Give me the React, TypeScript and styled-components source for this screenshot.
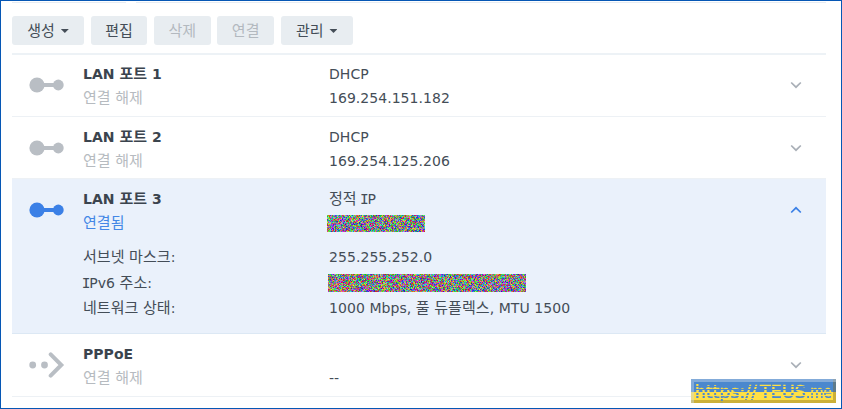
import React, { useEffect, useRef } from 'react';
import styled, { createGlobalStyle, css } from 'styled-components';

const GlobalStyle = createGlobalStyle`
  * { box-sizing: border-box; }
  body {
    margin: 0;
    background: #fff;
    font-family: 'DejaVu Sans', 'Noto Sans CJK KR', sans-serif;
    font-size: 14px;
    letter-spacing: 0.04px;
    color: #444d57;
  }
`;

const Window = styled.div`
  position: relative;
  width: 842px;
  height: 409px;
  border: 1px solid #0657b5;
  padding: 0 15px 0 11px;
  overflow: hidden;
`;

const TabEdge = styled.div`
  display: flex;
  gap: 10px;
  height: 2px;
  padding-top: 1px;
  i { height: 1px; background: #e6ecf3; }
  i:first-child { width: 114px; }
  i:last-child { flex: 1; }
`;

const Toolbar = styled.div`
  display: flex;
  gap: 6.8px;
  padding: 13px 0 8px;
`;

const Button = styled.button<{ $wide?: boolean }>`
  display: flex;
  align-items: center;
  justify-content: center;
  gap: 6px;
  width: ${(p) => (p.$wide ? 72 : 56.5)}px;
  height: 29px;
  padding: 0 0 2px;
  border: 0;
  border-radius: 3px;
  background: #e8edf1;
  color: #444d57;
  font: inherit;
  line-height: 27px;
  &:disabled { color: #b3b9bf; }
`;

const Caret = styled.span`
  width: 8px;
  height: 4px;
  margin-top: 3px;
  background: #444d57;
  clip-path: polygon(0 0, 100% 0, 50% 100%);
`;

const List = styled.div`
  border-top: 2px solid #edf2f6;
`;

const Row = styled.section<{ $active?: boolean; $height: number; $offset: number }>`
  display: grid;
  grid-template-columns: 71px 246px 1fr 44px;
  grid-template-rows: 62px;
  height: ${(p) => p.$height}px;
  padding-top: ${(p) => p.$offset}px;
  border-bottom: 1px solid #edf1f5;
  ${(p) => p.$active && css`
    background: #eaf1fb;
    border-bottom-color: #dce8f4;
  `}
`;

const IconCell = styled.div<{ $active?: boolean }>`
  padding-left: 17px;
  color: ${(p) => (p.$active ? '#3b80e6' : '#b9bec4')};
  svg { display: block; margin-top: 17px; }
`;

const Lines = styled.div`
  display: flex;
  flex-direction: column;
  align-items: flex-start;
  padding-top: 7px;
`;

const Line = styled.div<{ $tone?: 'muted' | 'blue'; $strong?: boolean }>`
  height: 24px;
  line-height: 24px;
  white-space: nowrap;
  font-weight: ${(p) => (p.$strong ? 700 : 400)};
  color: ${(p) => (p.$tone === 'muted' ? '#b6bbc0' : p.$tone === 'blue' ? '#4387e6' : p.$strong ? '#3b444e' : '#444d57')};
`;

const Hangul = styled.span`
  font-family: 'Noto Sans CJK KR', sans-serif;
  font-size: 15px;
  line-height: 0;
`;

const SerifI = styled.span`
  font-family: 'DejaVu Sans Mono', monospace;
  font-size: 14.5px;
  margin: 0 -1.4px 0 -1.2px;
  line-height: 0;
`;

const Details = styled.dl`
  grid-column: 2 / 4;
  display: grid;
  grid-template-columns: 246px 1fr;
  grid-auto-rows: 25.6px;
  align-content: start;
  margin: 0;
  padding-top: 3px;
  line-height: 25.6px;
  letter-spacing: 0.06px;
  white-space: nowrap;
  dt, dd { margin: 0; }
`;

const Toggle = styled.div<{ $active?: boolean }>`
  padding: 26px 0 0 7.6px;
  color: ${(p) => (p.$active ? '#3b80e6' : '#a9afb7')};
  svg { display: block; }
`;

const NoiseCanvas = styled.canvas<{ $shift: number; $drop: number }>`
  display: block;
  flex: none;
  margin: ${(p) => p.$drop}px 0 0 ${(p) => p.$shift}px;
`;

const Badge = styled.div`
  position: absolute;
  left: 690px;
  top: 378px;
  width: 145px;
  height: 24px;
  background: linear-gradient(#4b88ce 0 13px, #ffe045 13px);
  box-shadow: inset 3px 3px 0 rgba(200, 215, 230, 0.45), inset -3px -3px 0 rgba(125, 105, 40, 0.4);
  svg { display: block; overflow: visible; }
`;

const Text = ({ children }: { children: string }) => (
  <>
    {children.split(/([가-힣]+|I(?=P))/).map((part, i) => {
      if (part === 'I') return <SerifI key={i}>I</SerifI>;
      return /[가-힣]/.test(part) ? <Hangul key={i}>{part}</Hangul> : part;
    })}
  </>
);

const LinkIcon = () => (
  <svg width="36" height="26" viewBox="0 0 36 26" fill="currentColor">
    <rect x="8" y="11" width="20" height="4" />
    <circle cx="8" cy="13" r="7.6" />
    <circle cx="29.3" cy="13" r="5.4" />
  </svg>
);

const DialIcon = () => (
  <svg width="36" height="26" viewBox="0 0 36 26" fill="currentColor">
    <circle cx="3.7" cy="13" r="3.4" />
    <circle cx="15.5" cy="13" r="3.4" />
    <path d="M21.7 2.3 32.3 13 21.7 23.7" fill="none" stroke="currentColor" strokeWidth="4" strokeLinecap="round" />
  </svg>
);

const Chevron = ({ up }: { up?: boolean }) => (
  <svg width="12" height="8" viewBox="0 0 12 8" fill="none" stroke="currentColor" strokeWidth="1.7">
    <path d={up ? 'M1.2 6.5 6 1.8 10.8 6.5' : 'M1.2 1.5 6 6.2 10.8 1.5'} />
  </svg>
);

const Noise = ({ width, height, shift, drop, seed }: { width: number; height: number; shift: number; drop: number; seed: number }) => {
  const ref = useRef<HTMLCanvasElement>(null);
  useEffect(() => {
    const ctx = ref.current!.getContext('2d')!;
    const image = ctx.createImageData(width, height);
    let state = seed;
    const next = () => {
      state = (Math.imul(state, 1664525) + 1013904223) >>> 0;
      return state / 4294967296;
    };
    for (let i = 0; i < image.data.length; i += 4) {
      const hue = next() * 360;
      const light = 0.4 + next() * 0.22;
      const sat = 0.72 * Math.min(light, 1 - light);
      [0, 8, 4].forEach((n, channel) => {
        const k = (n + hue / 30) % 12;
        image.data[i + channel] = 255 * (light - sat * Math.max(-1, Math.min(k - 3, 9 - k, 1)));
      });
      image.data[i + 3] = 255;
    }
    ctx.putImageData(image, 0, 0);
  }, [width, height, seed]);
  return <NoiseCanvas ref={ref} width={width} height={height} $shift={shift} $drop={drop} />;
};

const Watermark = () => (
  <Badge>
    <svg width="145" height="24" viewBox="0 0 145 24">
      <defs>
        <linearGradient id="ink" gradientUnits="userSpaceOnUse" x1="0" y1="0" x2="0" y2="24">
          <stop offset="0.542" stopColor="#ffe045" />
          <stop offset="0.542" stopColor="#4b88ce" />
        </linearGradient>
        <pattern id="scan" width="145" height="3" y="2" patternUnits="userSpaceOnUse">
          <rect width="145" height="2" fill="#fff" />
        </pattern>
        <mask id="rows" maskUnits="userSpaceOnUse" x="0" y="0" width="145" height="24">
          <rect width="145" height="24" fill="url(#scan)" />
        </mask>
      </defs>
      <g mask="url(#rows)" fill="url(#ink)" stroke="url(#ink)" strokeWidth="0.4" fontFamily="'DejaVu Sans', sans-serif" fontSize="17" letterSpacing="0">
        <text x="4" y="19" textLength="62" lengthAdjust="spacingAndGlyphs">https://</text>
        <text x="69" y="19" textLength="46" lengthAdjust="spacingAndGlyphs">TEUS</text>
        <text x="115" y="19" textLength="26" lengthAdjust="spacingAndGlyphs">.me</text>
      </g>
    </svg>
  </Badge>
);

type Port = {
  name: string;
  status: string;
  mode?: string;
  address?: string;
  height: number;
  offset: number;
  active?: boolean;
  dial?: boolean;
};

const ports: Port[] = [
  { name: 'LAN 포트 1', status: '연결 해제', mode: 'DHCP', address: '169.254.151.182', height: 62, offset: 0 },
  { name: 'LAN 포트 2', status: '연결 해제', mode: 'DHCP', address: '169.254.125.206', height: 62.4, offset: 0.6 },
  { name: 'LAN 포트 3', status: '연결됨', mode: '정적 IP', height: 154.6, offset: 0.6, active: true },
  { name: 'PPPoE', status: '연결 해제', mode: '', address: '--', height: 63, offset: 0.6, dial: true },
];

const PortRow = ({ port }: { port: Port }) => (
  <Row $active={port.active} $height={port.height} $offset={port.offset}>
    <IconCell $active={port.active}>{port.dial ? <DialIcon /> : <LinkIcon />}</IconCell>
    <Lines>
      <Line $strong><Text>{port.name}</Text></Line>
      <Line $tone={port.active ? 'blue' : 'muted'}><Text>{port.status}</Text></Line>
    </Lines>
    <Lines>
      <Line><Text>{port.mode ?? ''}</Text></Line>
      {port.address ? <Line>{port.address}</Line> : <Noise width={98} height={17} shift={-2} drop={4} seed={91} />}
    </Lines>
    <Toggle $active={port.active}><Chevron up={port.active} /></Toggle>
    {port.active && (
      <Details>
        <dt><Text>서브넷 마스크:</Text></dt>
        <dd>255.255.252.0</dd>
        <dt><Text>IPv6 주소:</Text></dt>
        <dd><Noise width={198} height={18} shift={-1} drop={3} seed={207} /></dd>
        <dt><Text>네트워크 상태:</Text></dt>
        <dd><Text>1000 Mbps, 풀 듀플렉스, MTU 1500</Text></dd>
      </Details>
    )}
  </Row>
);

export default function App() {
  return (
    <>
      <GlobalStyle />
      <Window>
        <TabEdge><i /><i /></TabEdge>
        <Toolbar>
          <Button $wide><Text>생성</Text><Caret /></Button>
          <Button><Text>편집</Text></Button>
          <Button disabled><Text>삭제</Text></Button>
          <Button disabled><Text>연결</Text></Button>
          <Button $wide><Text>관리</Text><Caret /></Button>
        </Toolbar>
        <List>
          {ports.map((port) => <PortRow key={port.name} port={port} />)}
        </List>
        <Watermark />
      </Window>
    </>
  );
}
